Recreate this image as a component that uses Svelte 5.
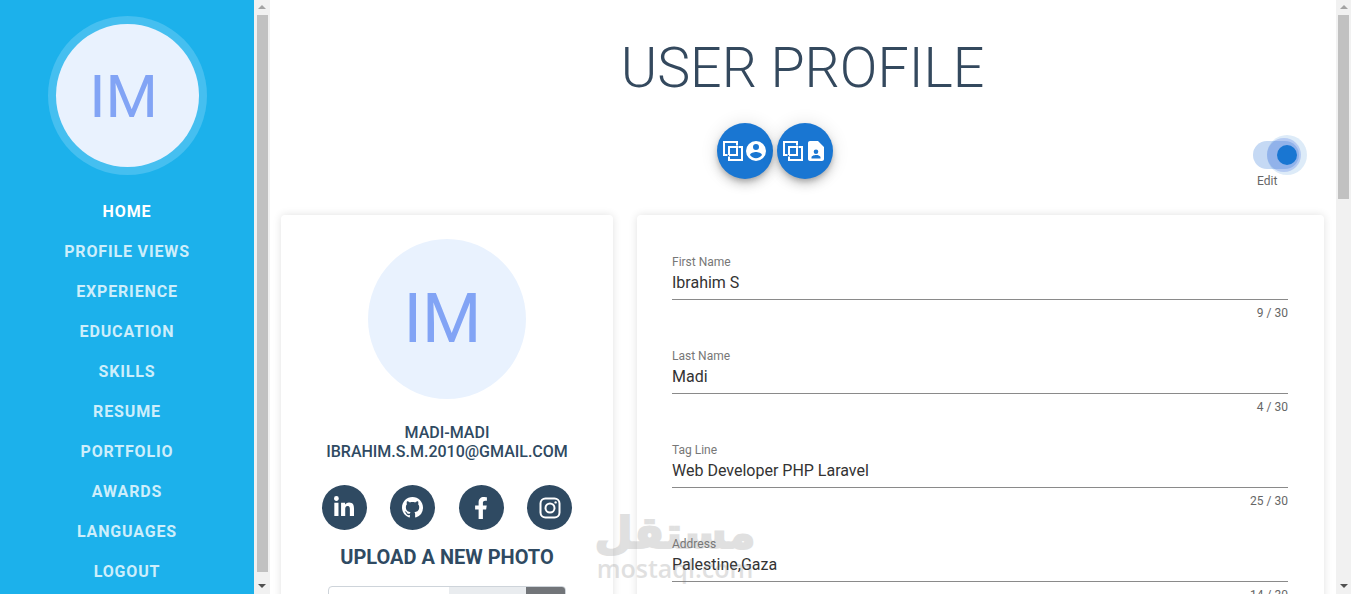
<script>
  const links = ['Home', 'Profile Views', 'Experience', 'Education', 'Skills', 'Resume', 'Portfolio', 'Awards', 'Languages', 'Logout'];
  const fields = [
    { label: 'First Name', value: 'Ibrahim S', count: '9 / 30' },
    { label: 'Last Name', value: 'Madi', count: '4 / 30' },
    { label: 'Tag Line', value: 'Web Developer PHP Laravel', count: '25 / 30' },
    { label: 'Address', value: 'Palestine,Gaza', count: '14 / 30' }
  ];
</script>

<div class="page">
  <aside class="sidebar">
    <div class="ring"><div class="avatar small">IM</div></div>
    <nav>
      {#each links as link, i}
        <a href="#top" class:active={i === 0}>{link}</a>
      {/each}
    </nav>
  </aside>

  <div class="scrollbar">
    <span class="arrow up"></span>
    <div class="thumb long"></div>
    <span class="arrow down"></span>
  </div>

  <main>
    <h1>USER PROFILE</h1>

    <div class="actions">
      <button class="fab" aria-label="Copy profile link">
        <svg width="22" height="22" viewBox="0 0 22 22" fill="none" stroke="#fff" stroke-width="2">
          <path d="M15 5.5V2H2V15H5.5M7 15V7H15V15H7M16.5 7H20V20H7V16.5" />
        </svg>
        <svg width="24" height="24" viewBox="0 0 24 24" fill="#fff">
          <path d="M12,19.2C9.5,19.2 7.29,17.92 6,16C6.03,14 10,12.9 12,12.9C14,12.9 17.97,14 18,16C16.71,17.92 14.5,19.2 12,19.2M12,5A3,3 0 0,1 15,8A3,3 0 0,1 12,11A3,3 0 0,1 9,8A3,3 0 0,1 12,5M12,2A10,10 0 0,0 2,12A10,10 0 0,0 12,22A10,10 0 0,0 22,12A10,10 0 0,0 12,2Z" />
        </svg>
      </button>
      <button class="fab" aria-label="Copy resume link">
        <svg width="22" height="22" viewBox="0 0 22 22" fill="none" stroke="#fff" stroke-width="2">
          <path d="M15 5.5V2H2V15H5.5M7 15V7H15V15H7M16.5 7H20V20H7V16.5" />
        </svg>
        <svg width="24" height="24" viewBox="0 0 24 24" fill="#fff" fill-rule="evenodd">
          <path d="M6 2H14L20 8V20C20 21.1 19.1 22 18 22H6C4.9 22 4 21.1 4 20V4C4 2.9 4.9 2 6 2ZM12 10.5A2.3 2.3 0 1 0 12 15.1A2.3 2.3 0 1 0 12 10.5ZM7.5 19.5H16.5V18.4C16.5 16.8 13.5 16 12 16C10.5 16 7.5 16.8 7.5 18.4Z" />
        </svg>
      </button>

      <div class="switch-wrap">
        <div class="switch">
          <span class="halo outer"></span>
          <span class="halo inner"></span>
          <span class="knob"></span>
        </div>
        <span class="switch-label">Edit</span>
      </div>
    </div>

    <div class="cards">
      <section class="card side">
        <div class="avatar big">IM</div>
        <p class="who">Madi-Madi<br />ibrahim.s.m.2010@gmail.com</p>
        <div class="socials">
          <span class="social">
            <svg width="20" height="23" viewBox="0 0 448 512" fill="#fff"><path d="M100.28 448H7.4V148.9h92.88zM53.79 108.1C24.09 108.1 0 83.5 0 53.8a53.79 53.79 0 0 1 107.58 0c0 29.7-24.1 54.3-53.79 54.3zM447.9 448h-92.68V302.4c0-34.7-.7-79.2-48.29-79.2-48.29 0-55.69 37.7-55.69 76.7V448h-92.78V148.9h89.08v40.8h1.3c12.4-23.5 42.69-48.3 87.88-48.3 94 0 111.28 61.9 111.28 142.3V448z" /></svg>
          </span>
          <span class="social">
            <svg width="21" height="21" viewBox="0 0 16 16" fill="#fff"><path d="M8 0C3.58 0 0 3.58 0 8c0 3.54 2.29 6.53 5.47 7.59.4.07.55-.17.55-.38 0-.19-.01-.82-.01-1.49-2.01.37-2.53-.49-2.69-.94-.09-.23-.48-.94-.82-1.13-.28-.15-.68-.52-.01-.53.63-.01 1.08.58 1.23.82.72 1.21 1.87.87 2.33.66.07-.52.28-.87.51-1.07-1.78-.2-3.64-.89-3.64-3.95 0-.87.31-1.59.82-2.15-.08-.2-.36-1.02.08-2.12 0 0 .67-.21 2.2.82.64-.18 1.32-.27 2-.27.68 0 1.36.09 2 .27 1.53-1.04 2.2-.82 2.2-.82.44 1.1.16 1.92.08 2.12.51.56.82 1.27.82 2.15 0 3.07-1.87 3.75-3.65 3.95.29.25.54.73.54 1.48 0 1.07-.01 1.93-.01 2.2 0 .21.15.46.55.38A8.013 8.013 0 0016 8c0-4.42-3.58-8-8-8z" /></svg>
          </span>
          <span class="social">
            <svg width="14" height="22" viewBox="0 0 320 512" fill="#fff"><path d="M279.14 288l14.22-92.66h-88.91v-60.13c0-25.35 12.42-50.06 52.24-50.06h40.42V6.26S260.43 0 225.36 0c-73.22 0-121.08 44.38-121.08 124.72v70.62H22.89V288h81.39v224h100.17V288z" /></svg>
          </span>
          <span class="social">
            <svg width="22" height="22" viewBox="0 0 22 22" fill="none" stroke="#fff" stroke-width="2">
              <rect x="1.5" y="1.5" width="19" height="19" rx="5" />
              <circle cx="11" cy="11" r="4.5" />
              <circle cx="16.6" cy="5.4" r="1.2" fill="#fff" stroke="none" />
            </svg>
          </span>
        </div>
        <h2>Upload a new photo</h2>
        <div class="file">
          <span class="file-name"></span>
          <span class="file-browse"></span>
          <span class="file-go"></span>
        </div>
      </section>

      <section class="card form">
        {#each fields as field}
          <div class="field">
            <label for={field.label}>{field.label}</label>
            <input id={field.label} value={field.value} />
            <span class="count">{field.count}</span>
          </div>
        {/each}
      </section>
    </div>

    <div class="watermark">
      <span class="wm-ar">مستقل</span>
      <span class="wm-en">mostaql.com</span>
    </div>
  </main>

  <div class="scrollbar">
    <span class="arrow up"></span>
    <div class="thumb short"></div>
    <span class="arrow down"></span>
  </div>
</div>

<style>
  :global(body) {
    overflow: hidden;
    background: #fff;
  }

  .page {
    display: flex;
    height: 594px;
    overflow: hidden;
    font-family: Roboto, sans-serif;
  }

  .sidebar {
    flex: 0 0 254px;
    display: flex;
    flex-direction: column;
    align-items: center;
    background: #1cb1eb;
  }

  .ring {
    margin-top: 16px;
    padding: 8px;
    border-radius: 50%;
    background: #45bff0;
  }

  .avatar {
    display: flex;
    align-items: center;
    justify-content: center;
    border-radius: 50%;
    background: #e9f2fe;
    color: #82a4f5;
    box-sizing: border-box;
  }

  .avatar.small {
    width: 143px;
    height: 143px;
    padding: 2px 7px 0 0;
    font-size: 60px;
  }

  .avatar.big {
    width: 158px;
    height: 160px;
    padding-right: 9px;
    font-size: 68px;
  }

  nav {
    display: flex;
    flex-direction: column;
    align-items: center;
    margin-top: 17px;
  }

  nav a {
    height: 40px;
    line-height: 40px;
    color: #cdeefb;
    font-size: 16px;
    font-weight: 700;
    letter-spacing: 0.85px;
    text-decoration: none;
    text-transform: uppercase;
  }

  nav a.active {
    color: #fff;
  }

  .scrollbar {
    flex: 0 0 15px;
    display: flex;
    flex-direction: column;
    align-items: center;
    background: #f1f1f1;
  }

  .scrollbar:first-of-type {
    flex-basis: 16px;
  }

  .thumb {
    width: 11px;
    background: #c1c1c1;
  }

  .thumb.long {
    height: 557px;
    margin-bottom: auto;
  }

  .thumb.short {
    height: 184px;
    margin-bottom: auto;
  }

  .arrow {
    flex: none;
    width: 0;
    border-left: 4px solid transparent;
    border-right: 4px solid transparent;
  }

  .arrow.up {
    margin: 5px 0 6px;
    border-bottom: 4px solid #a3a3a3;
  }

  .arrow.down {
    margin: 0 0 6px;
    border-top: 4px solid #505050;
  }

  main {
    position: relative;
    flex: 1;
    min-width: 0;
    padding: 0 12px 0 11px;
    background: #fff;
  }

  h1 {
    margin: 0;
    padding-top: 34px;
    color: #34495e;
    font-size: 55.5px;
    font-weight: 300;
    line-height: 69px;
    text-align: center;
  }

  .actions {
    display: flex;
    gap: 4px;
    height: 56px;
    margin-top: 20px;
    padding-left: 436px;
  }

  .fab {
    display: flex;
    align-items: center;
    justify-content: center;
    width: 56px;
    height: 56px;
    padding: 0;
    border: none;
    border-radius: 50%;
    background: #1976d2;
    box-shadow: 0 3px 5px -1px rgba(0, 0, 0, 0.2), 0 6px 10px 0 rgba(0, 0, 0, 0.14), 0 1px 18px 0 rgba(0, 0, 0, 0.12);
  }

  .switch-wrap {
    display: flex;
    flex-direction: column;
    align-items: flex-start;
    margin: 18px 0 0 416px;
  }

  .switch {
    flex: none;
    position: relative;
    width: 46px;
    height: 28px;
    border-radius: 14px;
    background: #c5d9f4;
  }

  .halo,
  .knob {
    position: absolute;
    border-radius: 50%;
  }

  .halo.outer {
    left: 14px;
    top: -6px;
    width: 40px;
    height: 40px;
    background: rgba(25, 118, 210, 0.15);
  }

  .halo.inner {
    left: 14px;
    top: -3px;
    width: 34px;
    height: 34px;
    background: rgba(80, 120, 225, 0.28);
  }

  .knob {
    left: 24px;
    top: 4px;
    width: 20px;
    height: 20px;
    background: #1976d2;
  }

  .switch-label {
    margin: 5px 0 0 4px;
    color: #666;
    font-size: 12px;
    line-height: 14px;
  }

  .cards {
    display: grid;
    grid-template-columns: 332px 687px;
    gap: 24px;
    margin-top: 36px;
  }

  .card {
    height: 560px;
    border-radius: 4px;
    background: #fff;
    box-shadow: 0 0 8px rgba(0, 0, 0, 0.12);
  }

  .side {
    display: flex;
    flex-direction: column;
    align-items: center;
    padding-top: 24px;
  }

  .who {
    margin: 24px 0 0;
    color: #2f4a62;
    font-size: 16px;
    font-weight: 500;
    line-height: 19px;
    text-align: center;
    text-transform: uppercase;
  }

  .socials {
    display: flex;
    gap: 23.4px;
    margin-top: 24px;
  }

  .social {
    display: flex;
    align-items: center;
    justify-content: center;
    width: 45px;
    height: 45px;
    border-radius: 50%;
    background: #2f4a62;
  }

  h2 {
    margin: 15px 0 0;
    color: #2f4a62;
    font-size: 20px;
    font-weight: 700;
    line-height: 24px;
    text-transform: uppercase;
  }

  .file {
    display: flex;
    width: 238px;
    height: 36px;
    margin-top: 17px;
    overflow: hidden;
    border: 1px solid #ced4da;
    border-radius: 4px;
    box-sizing: border-box;
  }

  .file-name {
    width: 120px;
  }

  .file-browse {
    width: 77px;
    background: #e9ecef;
  }

  .file-go {
    flex: 1;
    background: #727579;
  }

  .form {
    padding: 39px 36px 0 35px;
  }

  .field {
    display: flex;
    flex-direction: column;
    height: 94px;
  }

  label {
    color: #777;
    font-size: 12px;
    line-height: 16px;
  }

  input {
    height: 24px;
    padding: 0 0 5px;
    border: none;
    border-bottom: 1px solid #8a8a8a;
    border-radius: 0;
    outline: none;
    box-sizing: content-box;
    color: #333;
    font-family: inherit;
    font-size: 16px;
  }

  .count {
    margin-top: 6px;
    color: #666;
    font-size: 12px;
    line-height: 14px;
    text-align: right;
  }

  .watermark {
    position: absolute;
    left: 327px;
    top: 508px;
    display: flex;
    flex-direction: column;
    align-items: center;
    width: 156px;
    color: #777;
    opacity: 0.22;
    pointer-events: none;
  }

  .wm-ar {
    font-family: "DejaVu Sans", sans-serif;
    font-size: 44px;
    font-weight: 700;
    line-height: 50px;
    -webkit-text-stroke: 2px #777;
  }

  .wm-en {
    font-family: "Open Sans", sans-serif;
    font-size: 25px;
    font-weight: 600;
    line-height: 20px;
  }
</style>
